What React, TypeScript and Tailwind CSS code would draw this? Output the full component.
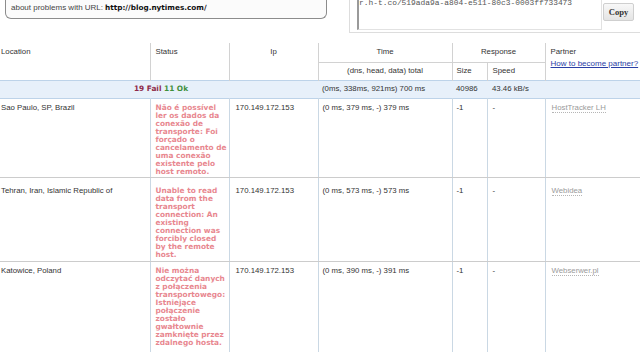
import React from "react";

interface CheckRow {
  location: string;
  status: string[];
  ip: string;
  time: string;
  size: string;
  speed: string;
  partner: string;
  height: string;
  pad: string;
}

const rows: CheckRow[] = [
  {
    location: "Sao Paulo, SP, Brazil",
    status: [
      "Não é possível",
      "ler os dados da",
      "conexão de",
      "transporte: Foi",
      "forçado o",
      "cancelamento de",
      "uma conexão",
      "existente pelo",
      "host remoto.",
    ],
    ip: "170.149.172.153",
    time: "(0 ms, 379 ms, -) 379 ms",
    size: "-1",
    speed: "-",
    partner: "HostTracker LH",
    height: "h-[79px]",
    pad: "pt-[5px]",
  },
  {
    location: "Tehran, Iran, Islamic Republic of",
    status: [
      "Unable to read",
      "data from the",
      "transport",
      "connection: An",
      "existing",
      "connection was",
      "forcibly closed",
      "by the remote",
      "host.",
    ],
    ip: "170.149.172.153",
    time: "(0 ms, 573 ms, -) 573 ms",
    size: "-1",
    speed: "-",
    partner: "Webidea",
    height: "h-[84px]",
    pad: "pt-[9px]",
  },
  {
    location: "Katowice, Poland",
    status: [
      "Nie można",
      "odczytać danych",
      "z połączenia",
      "transportowego:",
      "Istniejące",
      "połączenie",
      "zostało",
      "gwałtownie",
      "zamknięte przez",
      "zdalnego hosta.",
    ],
    ip: "170.149.172.153",
    time: "(0 ms, 390 ms, -) 391 ms",
    size: "-1",
    speed: "-",
    partner: "Webserwer.pl",
    height: "h-[92px]",
    pad: "pt-[5px]",
  },
];

export default function App() {
  return (
    <div className="w-[640px] h-[352px] overflow-hidden bg-white text-[#333] font-['Liberation_Sans',Arial,sans-serif] text-[7.8px]">
      {/* top: report box + share link */}
      <div className="flex items-start h-[43px]">
        <div className="ml-[5px] w-[322px] h-[19px] border-x border-b border-[#8c8c8c] rounded-b-[6px] bg-[#fbfbfb] pl-[5px] flex items-start pt-[3px] leading-[9px]">
          <span className="text-[8px] text-[#444]">about problems with URL:</span>
          <span className="ml-[2px] font-['DejaVu_Sans',sans-serif] font-bold text-[7.3px] text-[#111]">
            http://blog.nytimes.com/
          </span>
        </div>
        <div className="ml-[22px] flex-1 h-[33px] border-l border-b border-[#dddddd] flex items-start pl-[7px]">
          <div className="w-[245px] h-[30px] border-l-2 border-b border-r border-l-[#9a9a9a] border-b-[#e2e2e2] border-r-[#e2e2e2] bg-white overflow-hidden">
            <div className="-mt-[2px] font-['Liberation_Mono',monospace] text-[7.9px] leading-[9px] text-[#555]">
              r.h-t.co/519ada9a-a804-e511-80c3-0003ff733473
            </div>
          </div>
          <button
            type="button"
            className="mt-[3px] ml-px w-[31px] h-[18px] rounded-[2px] border border-[#cfcfcf] bg-gradient-to-b from-[#f8f8f8] to-[#e4e4e4] font-['Liberation_Serif',serif] font-bold text-[8.6px] text-[#333] leading-none"
          >
            Copy
          </button>
        </div>
      </div>

      <table className="w-[640px] table-fixed border-collapse">
        <colgroup>
          <col className="w-[150px]" />
          <col className="w-[79px]" />
          <col className="w-[89px]" />
          <col className="w-[134px]" />
          <col className="w-[35px]" />
          <col className="w-[58px]" />
          <col className="w-[95px]" />
        </colgroup>
        <thead>
          <tr className="h-[19px]">
            <th rowSpan={2} className="align-top text-left font-normal pl-[1px] pt-[5px] leading-[8px] border-r border-[#d2d2d2]">
              Location
            </th>
            <th rowSpan={2} className="align-top text-left font-normal pl-[5px] pt-[5px] leading-[8px] border-r border-[#d2d2d2]">
              Status
            </th>
            <th rowSpan={2} className="align-top text-center font-normal pt-[5px] leading-[8px] border-r border-[#d2d2d2]">
              Ip
            </th>
            <th className="align-top text-center font-normal pt-[5px] leading-[8px] border-r border-b border-[#d2d2d2]">
              Time
            </th>
            <th colSpan={2} className="align-top text-center font-normal pt-[5px] leading-[8px] border-r border-b border-[#d2d2d2]">
              Response
            </th>
            <th rowSpan={2} className="align-top text-left font-normal pl-[5px] pt-[5px] leading-[8px]">
              <div>Partner</div>
              <a href="#" className="block mt-[4px] text-[8px] text-[#2a3ea6] underline whitespace-nowrap">
                How to become partner?
              </a>
            </th>
          </tr>
          <tr className="h-[18px]">
            <th className="align-top text-center font-normal pt-[4px] leading-[8px] border-r border-[#d2d2d2]">
              (dns, head, data) total
            </th>
            <th className="align-top text-left font-normal pl-[4px] pt-[4px] leading-[8px] border-r border-[#d2d2d2]">
              Size
            </th>
            <th className="align-top text-left font-normal pl-[5px] pt-[4px] leading-[8px] border-r border-[#d2d2d2]">
              Speed
            </th>
          </tr>
        </thead>
        <tbody>
          <tr className="h-[18px] bg-[#e7f0fa] border-y border-[#bdd3e9]">
            <td colSpan={3} className="text-center pl-[4px] font-['DejaVu_Sans',sans-serif] font-bold text-[7.4px]">
              <span className="text-[#8e2a48]">19 Fail</span>{" "}
              <span className="text-[#3f8f3a]">11 Ok</span>
            </td>
            <td className="pl-[4px] whitespace-nowrap">(0ms, 338ms, 921ms) 700 ms</td>
            <td className="pl-[4px]">40986</td>
            <td className="pl-[5px] whitespace-nowrap">43.46 kB/s</td>
            <td />
          </tr>
          {rows.map((row) => (
            <tr key={row.location} className={row.height}>
              <td className={`align-top pl-[1px] leading-[8px] whitespace-nowrap border-r border-b border-r-[#cad8e4] border-b-[#cccccc] border-b-dashed ${row.pad}`}>
                {row.location}
              </td>
              <td className={`align-top pl-[5px] border-r border-b border-r-[#cad8e4] border-b-[#cccccc] border-b-dashed ${row.pad}`}>
                <div className="font-['DejaVu_Sans',sans-serif] font-bold text-[7.4px] leading-[8px] text-[#e8878f]">
                  {row.status.map((line) => (
                    <div key={line} className="whitespace-nowrap">
                      {line}
                    </div>
                  ))}
                </div>
              </td>
              <td className={`align-top pl-[6px] leading-[8px] border-r border-b border-r-[#cad8e4] border-b-[#cccccc] border-b-dashed ${row.pad}`}>
                {row.ip}
              </td>
              <td className={`align-top pl-[4px] leading-[8px] whitespace-nowrap border-r border-b border-r-[#cad8e4] border-b-[#cccccc] border-b-dashed ${row.pad}`}>
                {row.time}
              </td>
              <td className={`align-top pl-[4px] leading-[8px] border-r border-b border-r-[#cad8e4] border-b-[#cccccc] border-b-dashed ${row.pad}`}>
                {row.size}
              </td>
              <td className={`align-top pl-[5px] leading-[8px] border-r border-b border-r-[#cad8e4] border-b-[#cccccc] border-b-dashed ${row.pad}`}>
                {row.speed}
              </td>
              <td className={`align-top pl-[6px] leading-[8px] border-b border-b-[#cccccc] border-b-dashed ${row.pad}`}>
                <span className="text-[#9a9a9a] border-b border-dotted border-[#b5b5b5]">{row.partner}</span>
              </td>
            </tr>
          ))}
        </tbody>
      </table>
    </div>
  );
}
